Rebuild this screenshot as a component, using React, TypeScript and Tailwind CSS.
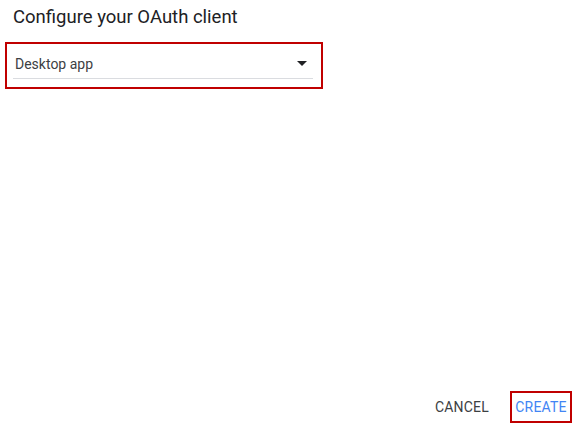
export default function App() {
  return (
    <div
      className="flex h-[426px] w-[577px] flex-col bg-white"
      style={{ fontFamily: "Roboto, 'Liberation Sans', sans-serif" }}
    >
      <h1 className="ml-[13px] mt-[5px] text-[18.5px] leading-[25px] text-[#202124]">
        Configure your OAuth client
      </h1>
      <div className="ml-[5px] mt-[12px] h-[47px] w-[318px] border-2 border-[#c00000] pl-[6px] pr-[8px] pt-[7px]">
        <div className="flex h-[28px] items-center justify-between border-b border-[#dadce0] pl-[2px] pr-[6px]">
          <span className="text-[14px] text-[#3c4043]">Desktop app</span>
          <svg width="10" height="5" viewBox="0 0 10 5" className="mb-[2px]">
            <path d="M0 0h10L5 5z" fill="#202124" />
          </svg>
        </div>
      </div>
      <div className="flex-1" />
      <div className="mb-[3px] mr-[5px] flex items-center justify-end gap-[21px]">
        <button className="text-[14px] uppercase tracking-[0.2px] text-[#3c4043]">
          Cancel
        </button>
        <button className="flex h-[32px] w-[62px] items-center justify-center border-2 border-[#c00000] text-[14px] uppercase tracking-[0.2px] text-[#4285f4]">
          Create
        </button>
      </div>
    </div>
  );
}
